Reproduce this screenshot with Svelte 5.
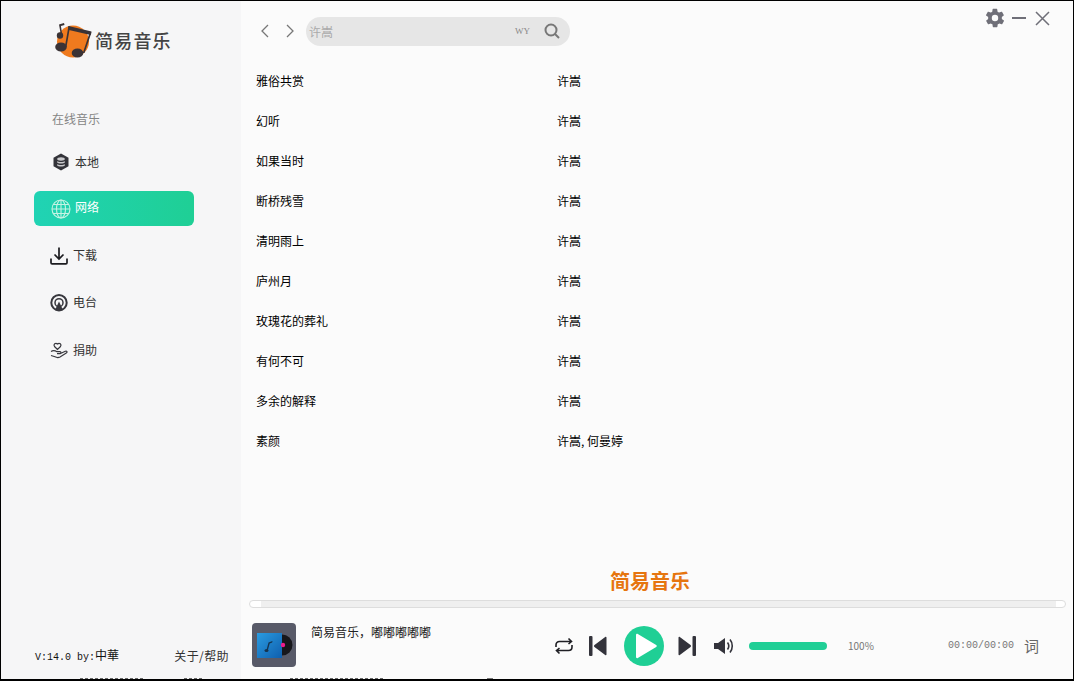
<script lang="ts">
const songs = [
  { name: '雅俗共赏', singer: '许嵩' },
  { name: '幻听', singer: '许嵩' },
  { name: '如果当时', singer: '许嵩' },
  { name: '断桥残雪', singer: '许嵩' },
  { name: '清明雨上', singer: '许嵩' },
  { name: '庐州月', singer: '许嵩' },
  { name: '玫瑰花的葬礼', singer: '许嵩' },
  { name: '有何不可', singer: '许嵩' },
  { name: '多余的解释', singer: '许嵩' },
  { name: '素颜', singer: '许嵩, 何曼婷' },
];
</script>

<div class="window">
	<aside class="side">
		<div class="brand">
			<svg class="logo" width="40" height="40" viewBox="0 0 40 40">
				<circle cx="20" cy="21.500" r="16" fill="#ef7a1e" />
				<path d="M15.500 6L38.500 11.500l-.8 3.500L14.800 9.800z" fill="#3a3336" />
				<path d="M15.500 6l1.600.4L13.500 27h-1.700zM36.800 12l1.700.4L31.500 33h-1.700z" fill="#3a3336" />
				<ellipse cx="8" cy="27" rx="5.800" ry="4.600" fill="#3a3336" />
				<ellipse cx="24.500" cy="33" rx="5.800" ry="4.600" fill="#3a3336" />
				<circle cx="7" cy="15.500" r="3.200" fill="#3a3336" />
				<path d="M8 15.500L6 4.500l5-1.500 .5 2-3.600 1 1.500 9.500z" fill="#3a3336" />
			</svg>
			<span class="brand-name">简易音乐</span>
		</div>
		<div class="section">在线音乐</div>
		<nav class="menu">
			<div class="item">
				<svg width="18" height="18" viewBox="0 0 18 18">
					<path d="M9 .5l7.500 4.200v8.600L9 17.500l-7.500-4.200V4.700z" fill="#333339" />
					<ellipse cx="9" cy="6" rx="3.800" ry="1.700" fill="#c9c9cc" />
					<path d="M5.200 8c1 1.300 6.600 1.300 7.600 0v1.400c-1 1.400-6.600 1.400-7.600 0zM5.200 11c1 1.300 6.600 1.300 7.600 0v1.400c-1 1.400-6.600 1.400-7.600 0z" fill="#c9c9cc" />
				</svg>
				<span>本地</span>
			</div>
			<div class="item active">
				<svg width="20" height="20" viewBox="0 0 20 20" fill="none" stroke="#c4f3e3" stroke-width="1.100">
					<circle cx="10" cy="10" r="9" />
					<ellipse cx="10" cy="10" rx="4.500" ry="9" />
					<path d="M10 1v18M1 10h18M2.300 5.500h15.400M2.300 14.500h15.400" />
				</svg>
				<span>网络</span>
			</div>
			<div class="item shift raised">
				<svg width="18" height="18" viewBox="0 0 18 18" fill="none" stroke="#1c1c20" stroke-width="1.700">
					<path d="M9 .5v11M4.500 7.500L9 12l4.500-4.500" />
					<path d="M1 11.500v4.200c0 .7.400 1.100 1.100 1.100h13.800c.7 0 1.100-.4 1.100-1.100v-4.200" />
				</svg>
				<span>下载</span>
			</div>
			<div class="item shift raised">
				<svg width="18" height="18" viewBox="0 0 18 18" fill="none" stroke="#37373d">
					<circle cx="9" cy="8.700" r="7.700" stroke-width="2" />
					<circle cx="9" cy="8.700" r="4" stroke-width="1.500" />
					<path d="M9 7.500l4 8.500H5z" fill="#37373d" stroke="none" />
				</svg>
				<span>电台</span>
			</div>
			<div class="item shift">
				<svg width="18" height="18" viewBox="0 0 18 18" fill="none" stroke="#37373d" stroke-width="1.200">
					<path d="M7.500 8.500L4.500 5.500C3 3.500 5.500 1.200 7.500 3c2-1.800 4.500.5 3 2.500z" />
					<path d="M1 10.500c2.500-1.500 4-1 6 .2h3c1.300 0 1.300 2 0 2H7M10.500 12.500l4.800-2.300c1.500-.6 2.400 1 1 1.800L10 16c-2 1-3.500.6-5-.2L1 14.500" />
				</svg>
				<span>捐助</span>
			</div>
		</nav>
		<div class="side-foot">
			<span class="version">V:14.0 by:<b>中華</b></span>
			<span class="about">关于/帮助</span>
		</div>
	</aside>

	<main class="main">
		<header class="top">
			<svg class="nav-arrow" width="10" height="14" viewBox="0 0 10 14" fill="none" stroke="#777" stroke-width="1.300">
				<path d="M8 1L2 7l6 6" />
			</svg>
			<svg class="nav-arrow" width="10" height="14" viewBox="0 0 10 14" fill="none" stroke="#777" stroke-width="1.300">
				<path d="M2 1l6 6-6 6" />
			</svg>
			<div class="search">
				<span class="query">许嵩</span>
				<span class="source">WY</span>
				<svg width="16" height="16" viewBox="0 0 16 16" fill="none" stroke="#777" stroke-width="2">
					<circle cx="7" cy="7" r="5.500" />
					<path d="M11 11l4 4" />
				</svg>
			</div>
			<div class="win-btns">
				<svg width="22" height="22" viewBox="0 0 24 24">
					<path fill="#6f6f78" d="M19.400 13c.1-.3.100-.7.100-1s0-.7-.1-1l2.100-1.600c.2-.2.200-.4.100-.6l-2-3.500c-.1-.2-.4-.3-.6-.2l-2.500 1c-.5-.4-1.100-.7-1.700-1l-.4-2.600c0-.3-.2-.5-.5-.5h-4c-.3 0-.5.200-.5.500l-.4 2.600c-.6.300-1.200.6-1.700 1l-2.500-1c-.2-.1-.5 0-.6.200l-2 3.500c-.1.200-.1.400.1.600L4.600 11c-.1.300-.1.700-.1 1s0 .7.100 1l-2.100 1.600c-.2.200-.2.400-.1.600l2 3.500c.1.200.4.300.6.200l2.500-1c.5.400 1.100.7 1.700 1l.4 2.600c0 .3.200.5.500.5h4c.3 0 .5-.2.500-.5l.4-2.600c.6-.3 1.200-.6 1.700-1l2.500 1c.2.100.5 0 .6-.2l2-3.500c.1-.2.100-.4-.1-.6zM12 15.500a3.500 3.500 0 1 1 0-7 3.500 3.500 0 0 1 0 7z" />
				</svg>
				<span class="minimize"></span>
				<svg class="close" width="15" height="15" viewBox="0 0 15 15" stroke="#6f6f78" stroke-width="1.500">
					<path d="M1 1l13 13M14 1L1 14" />
				</svg>
			</div>
		</header>

		<ul class="songs">
			{#each songs as song}
				<li class="song">
					<span class="song-name">{song.name}</span>
					<span>{song.singer}</span>
				</li>
			{/each}
		</ul>

		<div class="lyric">简易音乐</div>
		<div class="progress"></div>

		<footer class="player">
			<div class="cover">
				<svg width="44" height="44" viewBox="0 0 44 44">
					<defs>
						<linearGradient id="sleeve" x1="0" y1="0" x2="1" y2="1">
							<stop offset="0" stop-color="#2a9be0" />
							<stop offset="1" stop-color="#0f5fae" />
						</linearGradient>
					</defs>
					<circle cx="30" cy="22" r="10.500" fill="#17171b" />
					<rect x="5" y="10" width="25" height="25" fill="url(#sleeve)" />
					<circle cx="31" cy="22" r="2.200" fill="#ee1c8c" />
					<path d="M14.500 27l2-7.500 4-1.500-.3 1.500-2.500 1-1.800 6.500z" fill="#16344f" />
					<ellipse cx="14.500" cy="27.500" rx="2" ry="1.500" fill="#16344f" />
				</svg>
			</div>
			<span class="track">简易音乐，嘟嘟嘟嘟嘟</span>
			<div class="controls">
				<svg width="20" height="18" viewBox="0 0 20 18" fill="none" stroke="#1f1f24" stroke-width="1.600">
					<path d="M2 10V8c0-2 1.300-3.500 3.500-3.500H17M14.500 1.500L17.500 4.500 14.500 7" />
					<path d="M18 8v2c0 2-1.300 3.500-3.500 3.500H3M5.500 11L2.500 13.500 5.500 16.500" />
				</svg>
				<svg class="prev" width="18" height="20" viewBox="0 0 18 20">
					<rect x="0" y="0" width="3.500" height="20" rx="1" fill="#33333b" />
					<path d="M17.500 1.500v17c0 .8-.8 1-1.300.6L5.500 11c-.7-.5-.7-1.500 0-2l10.700-8.100c.5-.4 1.300-.2 1.300.6z" fill="#33333b" />
				</svg>
				<div class="play">
					<svg width="22" height="26" viewBox="0 0 22 26">
						<path d="M1 2v22c0 1 1 1.500 1.800 1l18.400-11c.8-.5.800-1.500 0-2L2.800 1C2 .5 1 1 1 2z" fill="#fff" />
					</svg>
				</div>
				<svg class="next" width="18" height="20" viewBox="0 0 18 20">
					<rect x="14.500" y="0" width="3.500" height="20" rx="1" fill="#33333b" />
					<path d="M.5 1.500v17c0 .8.800 1 1.300.6L12.500 11c.7-.5.700-1.500 0-2L1.800.9C1.300.5.500.7.500 1.500z" fill="#33333b" />
				</svg>
				<svg class="vol" width="20" height="18" viewBox="0 0 20 18" fill="none">
					<path d="M0 6h4l7-5v16l-7-5H0z" fill="#33333b" />
					<path d="M13.500 5.500c1.500 2 1.500 5 0 7M16 2.500c3 3.500 3 9.500 0 13" stroke="#33333b" stroke-width="1.600" />
				</svg>
				<div class="volume"></div>
				<span class="percent">100%</span>
			</div>
			<span class="time">00:00/00:00</span>
			<span class="ci">词</span>
		</footer>
	</main>
	<div class="behind">
		<i class="speck a"></i>
		<i class="speck b"></i>
		<i class="speck c"></i>
		<i class="speck d"></i>
	</div>
</div>

<style>
	:global(body) {
		margin: 0;
		background: #fff;
	}

	.window {
		box-sizing: border-box;
		width: 1074px;
		height: 681px;
		border: 1px solid #000;
		border-bottom-width: 2px;
		display: grid;
		grid-template-columns: 240px 1fr;
		grid-template-rows: 1fr 2px;
		overflow: hidden;
		background: #fbfbfb;
		font-family: "Noto Sans CJK SC", "Liberation Sans", sans-serif;
		font-size: 12px;
		color: #111;
	}

	.side {
		background: #f6f6f7;
		display: flex;
		flex-direction: column;
		min-height: 0;
	}

	.brand {
		display: flex;
		align-items: center;
		height: 40px;
		margin-top: 19px;
		padding-left: 52px;
	}

	.logo {
		flex: none;
	}

	.brand-name {
		margin-left: 2px;
		font-size: 18px;
		font-weight: 500;
		letter-spacing: 1.200px;
		color: #444;
	}

	.section {
		margin-top: 49px;
		padding-left: 51px;
		line-height: 20px;
		color: #858585;
	}

	.menu {
		display: flex;
		flex-direction: column;
		gap: 12px;
		margin-top: 15px;
		padding: 0 47px 0 33px;
	}

	.item {
		display: flex;
		align-items: center;
		gap: 5px;
		height: 35px;
		padding-left: 18px;
		border-radius: 6px;
		color: #333;
	}

	.item.shift {
		padding-left: 16px;
		gap: 5px;
	}

	.item.raised span {
		margin-bottom: 2px;
	}

	.item.active {
		padding-left: 17px;
		gap: 4px;
		color: #fff;
		background: linear-gradient(90deg, #20d3b4, #1fcf95);
	}

	.item.active span {
		margin-bottom: 4px;
	}

	.side-foot {
		margin-top: auto;
		padding: 0 12px 10px 34px;
		display: flex;
		justify-content: space-between;
		align-items: center;
		line-height: 18px;
	}

	.version {
		font-family: "Liberation Mono", monospace;
		font-size: 10px;
		color: #111;
	}

	.version b {
		font-family: "Noto Sans CJK SC", sans-serif;
		font-size: 12px;
		font-weight: 400;
	}

	.about {
		color: #333;
		letter-spacing: 0.400px;
		margin-bottom: 2px;
	}

	.main {
		display: flex;
		flex-direction: column;
		min-width: 0;
		min-height: 0;
	}

	.top {
		display: flex;
		align-items: center;
		height: 60px;
		flex: none;
		padding-left: 19px;
	}

	.nav-arrow {
		margin-right: 15px;
		flex: none;
	}

	.nav-arrow + .nav-arrow {
		margin-right: 11px;
	}

	.search {
		box-sizing: border-box;
		display: flex;
		align-items: center;
		width: 264px;
		height: 29px;
		padding: 0 10px 0 3px;
		border-radius: 15px;
		background: #e6e6e6;
		color: #aaa;
	}

	.query {
		flex: 1;
	}

	.source {
		margin-right: 14px;
		font-family: "Liberation Serif", serif;
		font-size: 9px;
		color: #888;
	}

	.win-btns {
		margin-left: auto;
		align-self: flex-start;
		display: flex;
		align-items: center;
		margin-top: 6px;
		padding-right: 23px;
	}

	.minimize {
		width: 14px;
		height: 2px;
		margin-left: 6px;
		background: #6f6f78;
	}

	.close {
		margin-left: 9px;
	}

	.songs {
		flex: 1;
		list-style: none;
		margin: 0;
		padding: 0;
		min-height: 0;
	}

	.song {
		box-sizing: border-box;
		display: flex;
		align-items: center;
		height: 40px;
		padding: 0 0 2px 15px;
		color: #000;
	}

	.song-name {
		width: 301px;
	}

	.lyric {
		flex: none;
		margin-left: 369px;
		line-height: 30px;
		font-size: 20px;
		font-weight: 700;
		color: #e6750f;
	}

	.progress {
		flex: none;
		box-sizing: border-box;
		height: 8px;
		margin: 4px 7px 0 8px;
		border: 1px solid #ddd;
		border-radius: 4px;
		background: linear-gradient(90deg, #fff 11px, #efefef 11px, #efefef calc(100% - 9px), #fff calc(100% - 9px));
	}

	.player {
		flex: none;
		display: flex;
		align-items: center;
		height: 69px;
		padding-left: 11px;
	}

	.cover {
		flex: none;
		width: 44px;
		height: 44px;
		margin-top: 4px;
		border-radius: 4px;
		background: #585a68;
	}

	.track {
		width: 240px;
		margin-left: 15px;
		margin-bottom: 22px;
		color: #222;
	}

	.controls {
		display: flex;
		align-items: center;
		margin-top: 6px;
		margin-left: 3px;
	}

	.prev {
		margin-left: 15px;
	}

	.play {
		display: flex;
		align-items: center;
		justify-content: center;
		width: 40px;
		height: 40px;
		margin-left: 17px;
		padding-left: 3px;
		box-sizing: border-box;
		border-radius: 50%;
		background: #1fcf95;
	}

	.next {
		margin-left: 14px;
	}

	.vol {
		margin-left: 18px;
	}

	.volume {
		width: 78px;
		height: 8px;
		margin-left: 15px;
		border-radius: 4px;
		background: #20cf96;
	}

	.percent {
		margin-left: 21px;
		font-size: 10px;
		color: #777;
	}

	.time {
		margin-top: 6px;
		margin-left: 74px;
		font-family: "Liberation Mono", monospace;
		font-size: 10px;
		color: #777;
	}

	.ci {
		margin-top: 6px;
		margin-left: 10px;
		font-size: 15px;
		color: #666;
	}

	.behind {
		grid-column: 1 / -1;
		display: flex;
		align-items: flex-end;
		background: linear-gradient(90deg, #f6f6f7 240px, #fbfbfb 240px);
	}

	.speck {
		display: block;
		height: 1px;
		background: repeating-linear-gradient(90deg, #666 0 3px, transparent 3px 5px);
	}

	.speck.a {
		width: 65px;
		margin-left: 79px;
	}

	.speck.b {
		width: 18px;
		margin-left: 39px;
	}

	.speck.c {
		width: 95px;
		margin-left: 88px;
	}

	.speck.d {
		width: 6px;
		margin-left: 102px;
		background: #777;
	}
</style>
